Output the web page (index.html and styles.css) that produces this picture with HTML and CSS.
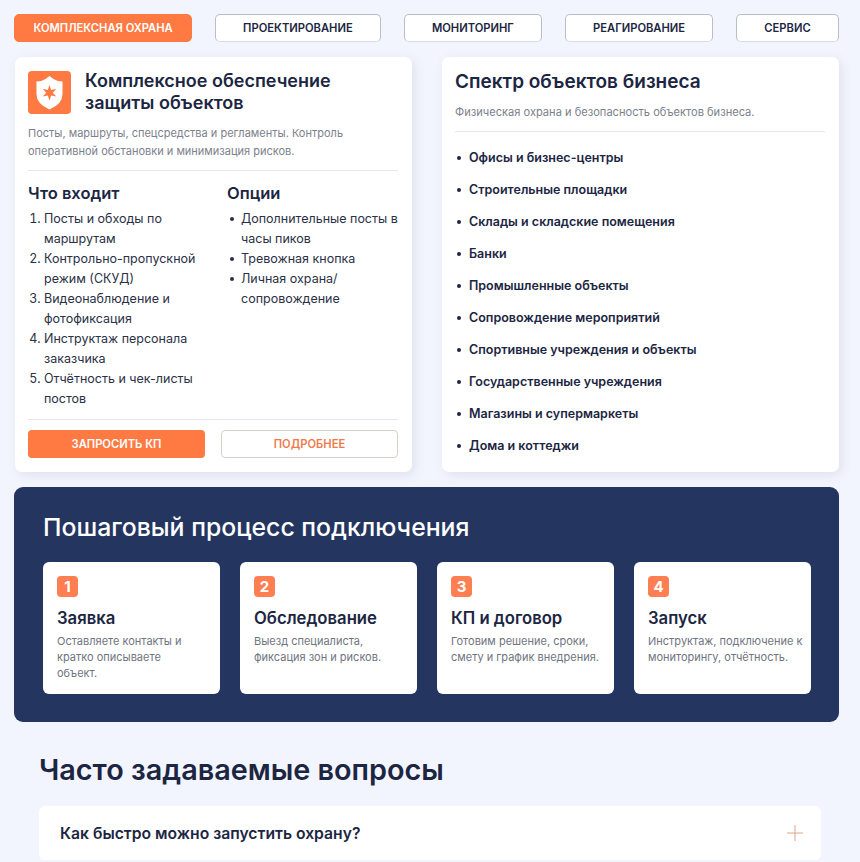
FILE: index.html
```html
<!DOCTYPE html>
<html lang="ru">
<head>
    <meta charset="UTF-8">
    <meta name="viewport" content="width=device-width, initial-scale=1.0">
    <title>Комплексная охрана</title>
    <link rel="stylesheet" href="styles.css">
</head>
<body>
    <nav class="tabs">
        <a class="tab active" href="#">Комплексная охрана</a>
        <a class="tab" href="#">Проектирование</a>
        <a class="tab" href="#">Мониторинг</a>
        <a class="tab" href="#">Реагирование</a>
        <a class="tab" href="#">Сервис</a>
    </nav>

    <section class="columns">
        <div class="card">
            <div class="card-head">
                <div class="card-icon">
                    <svg viewBox="0 0 43 43" width="43" height="43">
                        <path d="M21.5 5 l4 3 q4 2.5 9 2.5 v12.5 q0 10 -13 15.500 q-13 -5.500 -13 -15.500 v-12.500 q5 0 9 -2.500z" fill="#fff"/>
                        <path d="M21.500 14 l1.700 5 5.100 -1.200 -3.500 3.900 3.500 3.900 -5.100 -1.200 -1.700 5 -1.700 -5 -5.100 1.200 3.500 -3.900 -3.500 -3.900 5.100 1.200z" fill="#ff7a42"/>
                    </svg>
                </div>
                <h2>Комплексное обеспечение защиты объектов</h2>
            </div>
            <p class="lead">Посты, маршруты, спецсредства и регламенты. Контроль оперативной обстановки и минимизация рисков.</p>
            <div class="lists">
                <div>
                    <h3>Что входит</h3>
                    <ol>
                        <li>Посты и обходы по маршрутам</li>
                        <li>Контрольно-пропускной режим (СКУД)</li>
                        <li>Видеонаблюдение и фотофиксация</li>
                        <li>Инструктаж персонала заказчика</li>
                        <li>Отчётность и чек-листы постов</li>
                    </ol>
                </div>
                <div>
                    <h3>Опции</h3>
                    <ul>
                        <li>Дополнительные посты в часы пиков</li>
                        <li>Тревожная кнопка</li>
                        <li>Личная охрана/ сопровождение</li>
                    </ul>
                </div>
            </div>
            <div class="actions">
                <a class="btn btn-primary" href="#">Запросить КП</a>
                <a class="btn btn-outline" href="#">Подробнее</a>
            </div>
        </div>

        <div class="card card-objects">
            <h2>Спектр объектов бизнеса</h2>
            <p class="lead">Физическая охрана и безопасность объектов бизнеса.</p>
            <ul class="objects">
                <li>Офисы и бизнес-центры</li>
                <li>Строительные площадки</li>
                <li>Склады и складские помещения</li>
                <li>Банки</li>
                <li>Промышленные объекты</li>
                <li>Сопровождение мероприятий</li>
                <li>Спортивные учреждения и объекты</li>
                <li>Государственные учреждения</li>
                <li>Магазины и супермаркеты</li>
                <li>Дома и коттеджи</li>
            </ul>
        </div>
    </section>

    <section class="process">
        <h2>Пошаговый процесс подключения</h2>
        <div class="steps">
            <div class="step">
                <span class="num">1</span>
                <h3>Заявка</h3>
                <p>Оставляете контакты и<br>кратко описываете<br>объект.</p>
            </div>
            <div class="step">
                <span class="num">2</span>
                <h3>Обследование</h3>
                <p>Выезд специалиста,<br>фиксация зон и рисков.</p>
            </div>
            <div class="step">
                <span class="num">3</span>
                <h3>КП и договор</h3>
                <p>Готовим решение, сроки,<br>смету и график внедрения.</p>
            </div>
            <div class="step">
                <span class="num">4</span>
                <h3>Запуск</h3>
                <p>Инструктаж, подключение к<br>мониторингу, отчётность.</p>
            </div>
        </div>
    </section>

    <section class="faq">
        <h2>Часто задаваемые вопросы</h2>
        <div class="faq-item">
            <span>Как быстро можно запустить охрану?</span>
            <svg viewBox="0 0 16 16" width="16" height="16"><path d="M8 0v16M0 8h16" stroke="#e0a48c" stroke-width="1" fill="none"/></svg>
        </div>
    </section>
</body>
</html>
```

FILE: styles.css
```css
/* Global */
html, body {
    height: 862px;
    overflow: hidden;
}

body {
    margin: 0;
    padding: 14px 21px 0 14px;
    background-color: #f3f5fe;
    color: #1c2642;
    font-family: Inter, "Noto Sans", sans-serif;
    box-sizing: border-box;
}

h2, h3, p, ul, ol {
    margin: 0;
    padding: 0;
}

a {
    text-decoration: none;
}

/* Tabs */
.tabs {
    display: flex;
    justify-content: space-between;
}

.tab {
    height: 28px;
    padding: 0 27.300px;
    display: flex;
    align-items: center;
    background: #fff;
    border: 1px solid #b9bdc6;
    border-bottom-color: #d9dce3;
    border-radius: 5px;
    box-sizing: border-box;
    color: #1c2642;
    font-size: 11.200px;
    font-weight: 600;
    text-transform: uppercase;
}

.tab.active {
    padding: 0 18.500px;
    background: #ff7a42;
    border-color: #ff7a42;
    color: #fff;
}

/* Top cards */
.columns {
    display: grid;
    grid-template-columns: 397px 397px;
    justify-content: space-between;
    margin: 15px 0 15px 1px;
}

.card {
    height: 415px;
    padding: 13px 14px 13px 13px;
    background: #fff;
    border-radius: 7px;
    box-shadow: 3px 3px 12px rgba(40, 50, 90, 0.1);
    box-sizing: border-box;
}

.card-head {
    display: flex;
    gap: 14px;
    align-items: center;
}

.card-icon {
    width: 43px;
    height: 43px;
    flex: none;
    background: #ff7a42;
    border-radius: 4px;
}

.card-icon svg {
    display: block;
}

.card h2 {
    font-size: 18px;
    line-height: 22px;
    font-weight: 600;
}

.lead {
    margin-top: 10px;
    padding-bottom: 10px;
    border-bottom: 1px solid #e6e7ec;
    color: #7c818c;
    font-size: 11px;
    line-height: 18px;
}

.lists {
    display: grid;
    grid-template-columns: 199px 1fr;
    padding-top: 11px;
    padding-bottom: 10px;
    border-bottom: 1px solid #e6e7ec;
}

.lists h3 {
    margin-bottom: 5px;
    font-size: 16.500px;
    line-height: 22px;
    font-weight: 600;
}

.lists ol, .lists ul {
    font-size: 12.500px;
    line-height: 20px;
    color: #2a3145;
}

.lists ol {
    padding-left: 16px;
}

.lists ul {
    list-style: none;
}

.lists ul li, .objects li {
    display: flex;
    gap: 7px;
}

.lists ul li {
    padding-left: 3px;
}

.lists ul li::before, .objects li::before {
    content: "";
    flex: none;
    width: 4px;
    height: 4px;
    margin-top: 8px;
    background: currentColor;
    border-radius: 50%;
}

.actions {
    display: grid;
    grid-template-columns: 177px 177px;
    justify-content: space-between;
    margin-top: 10px;
}

.btn {
    height: 28px;
    display: flex;
    align-items: center;
    justify-content: center;
    border-radius: 4px;
    box-sizing: border-box;
    font-size: 11.200px;
    font-weight: 600;
    text-transform: uppercase;
}

.btn-primary {
    background: #ff7a42;
    color: #fff;
}

.btn-outline {
    background: #fff;
    border: 1px solid #d8cfc6;
    color: #ee7a4b;
}

/* Objects card */
.card-objects h2 {
    margin-top: 1px;
    font-size: 19px;
}

.card-objects .lead {
    margin-top: 10px;
    padding-bottom: 10px;
    font-size: 11.100px;
}

.objects {
    padding: 10px 0 0 2px;
    list-style: none;
    font-size: 12.500px;
    font-weight: 600;
    line-height: 32px;
}

.objects li {
    gap: 8px;
}

.objects li::before {
    margin-top: 14px;
}

/* Process */
.process {
    height: 235px;
    padding: 25px 28px 24px 29px;
    background: #243560;
    border-radius: 9px;
    box-sizing: border-box;
}

.process h2 {
    color: #fff;
    font-size: 24.800px;
    line-height: 30px;
    font-weight: 500;
}

.steps {
    display: grid;
    grid-template-columns: repeat(4, 177px);
    justify-content: space-between;
    margin-top: 20px;
}

.step {
    height: 132px;
    padding: 14px;
    background: #fff;
    border-radius: 6px;
    box-sizing: border-box;
}

.num {
    width: 21px;
    height: 21px;
    display: flex;
    align-items: center;
    justify-content: center;
    background: #ff7f52;
    border-radius: 4px;
    color: #fff;
    font-size: 15px;
    font-weight: 700;
}

.step h3 {
    margin-top: 10px;
    font-size: 16.700px;
    line-height: 22px;
    font-weight: 600;
}

.step p {
    margin-top: 4px;
    color: #6f7480;
    font-size: 11px;
    line-height: 16px;
    white-space: nowrap;
}

/* FAQ */
.faq {
    padding: 31px 18px 0 25px;
}

.faq h2 {
    font-size: 28.800px;
    line-height: 34px;
    font-weight: 600;
}

.faq-item {
    height: 54px;
    margin-top: 19px;
    padding: 0 18px 0 21px;
    display: flex;
    align-items: center;
    justify-content: space-between;
    background: #fff;
    border-radius: 6px;
    font-size: 15.700px;
    font-weight: 600;
}
```
